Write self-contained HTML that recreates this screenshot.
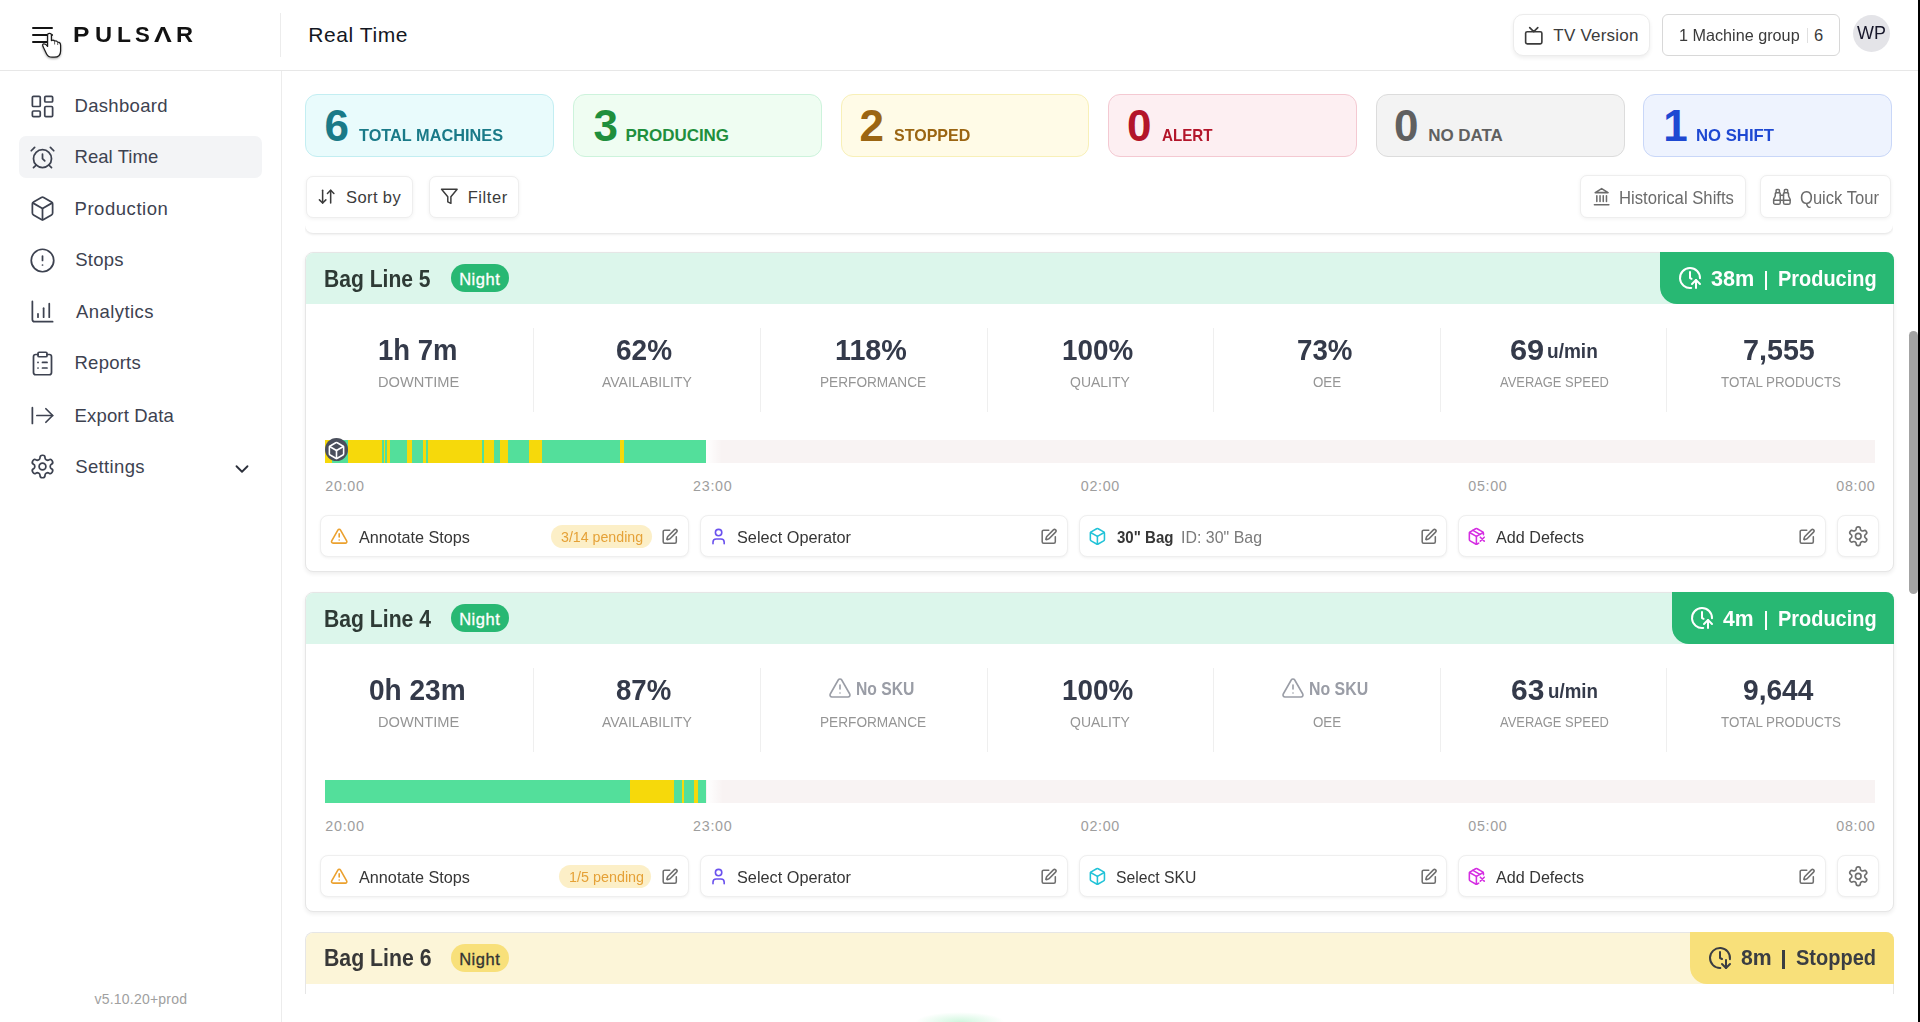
<!DOCTYPE html>
<html><head><meta charset="utf-8"><title>Real Time</title>
<style>
html,body{margin:0;padding:0;}
body{width:1920px;height:1022px;overflow:hidden;position:relative;background:#fff;font-family:"Liberation Sans",sans-serif;}
</style></head><body>
<div style="position:absolute;left:0px;top:70px;width:1918px;height:1px;background:#e7e7e7"></div><div style="position:absolute;left:280px;top:13px;width:1px;height:44px;background:#ececec"></div><div style="position:absolute;left:281px;top:71px;width:1px;height:951px;background:#ececec"></div><div style="position:absolute;left:1918px;top:0px;width:2px;height:1022px;background:#000"></div><div style="position:absolute;left:32px;top:27px;width:20.5px;height:2.1000000000000014px;background:#141414;border-radius:1px"></div><div style="position:absolute;left:32px;top:34px;width:20.5px;height:2.1000000000000014px;background:#141414;border-radius:1px"></div><div style="position:absolute;left:32px;top:41px;width:20.5px;height:2.1000000000000014px;background:#141414;border-radius:1px"></div><div style="position:absolute;left:73.36px;top:23.95px;font-size:22.5px;line-height:22.5px;font-weight:700;color:#121212;letter-spacing:0.000px;white-space:nowrap;transform:scaleX(1.0938);transform-origin:0 0;">P</div><div style="position:absolute;left:94.93px;top:23.95px;font-size:22.5px;line-height:22.5px;font-weight:700;color:#121212;letter-spacing:0.000px;white-space:nowrap;transform:scaleX(1.0515);transform-origin:0 0;">U</div><div style="position:absolute;left:117.27px;top:23.95px;font-size:22.5px;line-height:22.5px;font-weight:700;color:#121212;letter-spacing:0.000px;white-space:nowrap;transform:scaleX(1.0172);transform-origin:0 0;">L</div><div style="position:absolute;left:135.41px;top:23.95px;font-size:22.5px;line-height:22.5px;font-weight:700;color:#121212;letter-spacing:0.000px;white-space:nowrap;transform:scaleX(0.9853);transform-origin:0 0;">S</div><div style="position:absolute;left:154.28px;top:23.95px;font-size:22.5px;line-height:22.5px;font-weight:700;color:#121212;letter-spacing:0.000px;white-space:nowrap;transform:scaleX(1.1824);transform-origin:0 0;">&#923;</div><div style="position:absolute;left:175.93px;top:23.95px;font-size:22.5px;line-height:22.5px;font-weight:700;color:#121212;letter-spacing:0.000px;white-space:nowrap;transform:scaleX(1.0490);transform-origin:0 0;">R</div><svg style="position:absolute;left:0;top:0;filter:drop-shadow(0 1px 1.2px rgba(0,0,0,0.35))" width="80" height="70" viewBox="0 0 80 70">
<path d="M47.6 35Q47.6 33.3 49.5 33.3Q51.4 33.3 51.4 35L51.4 40.6Q53.6 39.6 54.6 41.2Q56.6 40.3 57.7 42.2Q60.6 42.2 60.6 45.6L60.6 51Q60.6 57.2 54.2 57.2L52.2 57.2Q48.2 57.2 46.6 54L43 46.6Q42.1 44.2 43.6 43.8Q45.6 43.4 47.6 46.4Z" fill="#fff" stroke="#1c1c1c" stroke-width="1.25" stroke-linejoin="round"/>
<path d="M54.6 41.2L54.6 44.5M57.7 42.2L57.7 45" stroke="#555" stroke-width="0.9"/>
</svg><div style="position:absolute;left:308.30px;top:24.22px;font-size:21px;line-height:21px;font-weight:400;color:#131722;letter-spacing:0.584px;white-space:nowrap;">Real Time</div><div style="position:absolute;left:1513px;top:13.5px;width:137px;height:42.5px;background:#fff;border:1px solid #ececec;border-radius:10px;box-sizing:border-box;box-shadow:0 2px 4px rgba(0,0,0,0.07)"></div><svg style="position:absolute;left:1524.4px;top:25.7px;" width="19.5" height="19.5" viewBox="0 0 24 24" fill="none" stroke="#3b3b3b" stroke-width="2" stroke-linecap="round" stroke-linejoin="round"><rect width="20" height="15" x="2" y="7" rx="2" ry="2"/><polyline points="17 2 12 7 7 2"/></svg><div style="position:absolute;left:1553.30px;top:26.71px;font-size:17px;line-height:17px;font-weight:400;color:#3b3b3b;letter-spacing:0.212px;white-space:nowrap;">TV Version</div><div style="position:absolute;left:1662px;top:14px;width:178px;height:41.5px;background:#fff;border:1px solid #d8d8d8;border-radius:6px;box-sizing:border-box"></div><div style="position:absolute;left:1679.02px;top:26.63px;font-size:16.5px;line-height:16.5px;font-weight:400;color:#3a3a3a;letter-spacing:0.000px;white-space:nowrap;transform:scaleX(0.9815);transform-origin:0 0;">1 Machine group</div><div style="position:absolute;left:1806.5px;top:28px;width:1.0px;height:15px;background:#e0e0e0"></div><div style="position:absolute;left:1813.90px;top:26.63px;font-size:16.5px;line-height:16.5px;font-weight:400;color:#3a3a3a;letter-spacing:0.000px;white-space:nowrap;">6</div><div style="position:absolute;left:1852.5px;top:14.5px;width:37px;height:37px;border-radius:50%;background:#e4e4e8"></div><div style="position:absolute;left:1857.00px;top:24.04px;font-size:18.5px;line-height:18.5px;font-weight:400;color:#17172a;letter-spacing:0.000px;white-space:nowrap;transform:scaleX(0.9702);transform-origin:0 0;">WP</div><div style="position:absolute;left:19px;top:136.4px;width:243px;height:41.900000000000006px;background:#f3f4f6;border-radius:7px"></div><svg style="position:absolute;left:28.7px;top:92.5px;" width="27" height="27" viewBox="0 0 24 24" fill="none" stroke="#3d4250" stroke-width="1.55" stroke-linecap="round" stroke-linejoin="round"><rect width="7" height="9" x="3" y="3" rx="1"/><rect width="7" height="5" x="14" y="3" rx="1"/><rect width="7" height="9" x="14" y="12" rx="1"/><rect width="7" height="5" x="3" y="16" rx="1"/></svg><div style="position:absolute;left:74.50px;top:97.24px;font-size:18.5px;line-height:18.5px;font-weight:400;color:#3d4250;letter-spacing:0.323px;white-space:nowrap;">Dashboard</div><svg style="position:absolute;left:28.7px;top:143.5px;" width="27" height="27" viewBox="0 0 24 24" fill="none" stroke="#3d4250" stroke-width="1.55" stroke-linecap="round" stroke-linejoin="round"><circle cx="12" cy="13" r="8"/><path d="M12 9v4l2 2"/><path d="M5 3 2 6"/><path d="m22 6-3-3"/><path d="M6.38 18.7 4 21"/><path d="M17.64 18.67 20 21"/></svg><div style="position:absolute;left:74.50px;top:148.24px;font-size:18.5px;line-height:18.5px;font-weight:400;color:#3d4250;letter-spacing:0.060px;white-space:nowrap;">Real Time</div><svg style="position:absolute;left:28.7px;top:195.2px;" width="27" height="27" viewBox="0 0 24 24" fill="none" stroke="#3d4250" stroke-width="1.55" stroke-linecap="round" stroke-linejoin="round"><path d="M21 8a2 2 0 0 0-1-1.73l-7-4a2 2 0 0 0-2 0l-7 4A2 2 0 0 0 3 8v8a2 2 0 0 0 1 1.73l7 4a2 2 0 0 0 2 0l7-4A2 2 0 0 0 21 16Z"/><path d="m3.3 7 8.7 5 8.7-5"/><path d="M12 22V12"/></svg><div style="position:absolute;left:74.50px;top:199.94px;font-size:18.5px;line-height:18.5px;font-weight:400;color:#3d4250;letter-spacing:0.549px;white-space:nowrap;">Production</div><svg style="position:absolute;left:28.7px;top:246.7px;" width="27" height="27" viewBox="0 0 24 24" fill="none" stroke="#3d4250" stroke-width="1.55" stroke-linecap="round" stroke-linejoin="round"><circle cx="12" cy="12" r="10"/><line x1="12" x2="12" y1="8" y2="12"/><line x1="12" x2="12.01" y1="16" y2="16"/></svg><div style="position:absolute;left:75.20px;top:251.44px;font-size:18.5px;line-height:18.5px;font-weight:400;color:#3d4250;letter-spacing:0.236px;white-space:nowrap;">Stops</div><svg style="position:absolute;left:28.7px;top:298.1px;" width="27" height="27" viewBox="0 0 24 24" fill="none" stroke="#3d4250" stroke-width="1.55" stroke-linecap="round" stroke-linejoin="round"><path d="M13 17V9"/><path d="M18 17V5"/><path d="M3 3v16a2 2 0 0 0 2 2h16"/><path d="M8 17v-3"/></svg><div style="position:absolute;left:76.00px;top:302.84px;font-size:18.5px;line-height:18.5px;font-weight:400;color:#3d4250;letter-spacing:0.428px;white-space:nowrap;">Analytics</div><svg style="position:absolute;left:28.7px;top:349.7px;" width="27" height="27" viewBox="0 0 24 24" fill="none" stroke="#3d4250" stroke-width="1.55" stroke-linecap="round" stroke-linejoin="round"><rect width="8" height="4" x="8" y="2" rx="1" ry="1"/><path d="M16 4h2a2 2 0 0 1 2 2v14a2 2 0 0 1-2 2H6a2 2 0 0 1-2-2V6a2 2 0 0 1 2-2h2"/><path d="M12 11h4"/><path d="M12 16h4"/><path d="M8 11h.01"/><path d="M8 16h.01"/></svg><div style="position:absolute;left:74.50px;top:354.44px;font-size:18.5px;line-height:18.5px;font-weight:400;color:#3d4250;letter-spacing:0.245px;white-space:nowrap;">Reports</div><svg style="position:absolute;left:28.7px;top:401.9px;" width="27" height="27" viewBox="0 0 24 24" fill="none" stroke="#3d4250" stroke-width="1.55" stroke-linecap="round" stroke-linejoin="round"><path d="M3 5v14"/><path d="M21 12H7"/><path d="m15 18 6-6-6-6"/></svg><div style="position:absolute;left:74.50px;top:406.64px;font-size:18.5px;line-height:18.5px;font-weight:400;color:#3d4250;letter-spacing:0.170px;white-space:nowrap;">Export Data</div><svg style="position:absolute;left:28.7px;top:453.3px;" width="27" height="27" viewBox="0 0 24 24" fill="none" stroke="#3d4250" stroke-width="1.55" stroke-linecap="round" stroke-linejoin="round"><path d="M12.22 2h-.44a2 2 0 0 0-2 2v.18a2 2 0 0 1-1 1.73l-.43.25a2 2 0 0 1-2 0l-.15-.08a2 2 0 0 0-2.73.73l-.22.38a2 2 0 0 0 .73 2.73l.15.1a2 2 0 0 1 1 1.72v.51a2 2 0 0 1-1 1.74l-.15.09a2 2 0 0 0-.73 2.73l.22.38a2 2 0 0 0 2.73.73l.15-.08a2 2 0 0 1 2 0l.43.25a2 2 0 0 1 1 1.73V20a2 2 0 0 0 2 2h.44a2 2 0 0 0 2-2v-.18a2 2 0 0 1 1-1.73l.43-.25a2 2 0 0 1 2 0l.15.08a2 2 0 0 0 2.73-.73l.22-.39a2 2 0 0 0-.73-2.73l-.15-.08a2 2 0 0 1-1-1.74v-.5a2 2 0 0 1 1-1.74l.15-.09a2 2 0 0 0 .73-2.73l-.22-.38a2 2 0 0 0-2.73-.73l-.15.08a2 2 0 0 1-2 0l-.43-.25a2 2 0 0 1-1-1.73V4a2 2 0 0 0-2-2z"/><circle cx="12" cy="12" r="3"/></svg><div style="position:absolute;left:75.20px;top:458.04px;font-size:18.5px;line-height:18.5px;font-weight:400;color:#3d4250;letter-spacing:0.358px;white-space:nowrap;">Settings</div><svg style="position:absolute;left:230.5px;top:457.5px;" width="22" height="22" viewBox="0 0 24 24" fill="none" stroke="#2b2f3a" stroke-width="2" stroke-linecap="round" stroke-linejoin="round"><path d="m6 9 6 6 6-6"/></svg><div style="position:absolute;left:94.45px;top:991.65px;font-size:14px;line-height:14px;font-weight:400;color:#a0a0a0;letter-spacing:0.223px;white-space:nowrap;">v5.10.20+prod</div><div style="position:absolute;left:305px;top:71px;width:1588px;height:162px;background:#fff;border-radius:0 0 8px 8px;box-shadow:0 1px 3px rgba(0,0,0,0.13);clip-path:inset(0 0 -10px 0)"></div><div style="position:absolute;left:305px;top:94px;width:248.60000000000002px;height:63px;background:#e9fbfc;border:1px solid #c3eef2;border-radius:12px;box-sizing:border-box"></div><div style="position:absolute;left:324.62px;top:103.75px;font-size:44px;line-height:44px;font-weight:700;color:#1a7a88;letter-spacing:0.000px;white-space:nowrap;">6</div><div style="position:absolute;left:359.10px;top:126.61px;font-size:17px;line-height:17px;font-weight:700;color:#1a7a88;letter-spacing:0.000px;white-space:nowrap;transform:scaleX(0.9590);transform-origin:0 0;">TOTAL MACHINES</div><div style="position:absolute;left:573.3px;top:94px;width:248.60000000000002px;height:63px;background:#effdf2;border:1px solid #cdf3dc;border-radius:12px;box-sizing:border-box"></div><div style="position:absolute;left:593.51px;top:103.75px;font-size:44px;line-height:44px;font-weight:700;color:#1f8f3d;letter-spacing:0.000px;white-space:nowrap;">3</div><div style="position:absolute;left:625.60px;top:126.61px;font-size:17px;line-height:17px;font-weight:700;color:#1f8f3d;letter-spacing:-0.059px;white-space:nowrap;">PRODUCING</div><div style="position:absolute;left:840.5px;top:94px;width:248.5999999999999px;height:63px;background:#fffbe7;border:1px solid #f8f0b8;border-radius:12px;box-sizing:border-box"></div><div style="position:absolute;left:859.62px;top:103.75px;font-size:44px;line-height:44px;font-weight:700;color:#9b6512;letter-spacing:0.000px;white-space:nowrap;">2</div><div style="position:absolute;left:893.82px;top:126.61px;font-size:17px;line-height:17px;font-weight:700;color:#9b6512;letter-spacing:0.000px;white-space:nowrap;transform:scaleX(0.9430);transform-origin:0 0;">STOPPED</div><div style="position:absolute;left:1108.1px;top:94px;width:248.5999999999999px;height:63px;background:#fdeff2;border:1px solid #f4c9d2;border-radius:12px;box-sizing:border-box"></div><div style="position:absolute;left:1127.12px;top:103.75px;font-size:44px;line-height:44px;font-weight:700;color:#b3152a;letter-spacing:0.000px;white-space:nowrap;">0</div><div style="position:absolute;left:1161.94px;top:126.61px;font-size:17px;line-height:17px;font-weight:700;color:#b3152a;letter-spacing:0.000px;white-space:nowrap;transform:scaleX(0.8918);transform-origin:0 0;">ALERT</div><div style="position:absolute;left:1376px;top:94px;width:248.5999999999999px;height:63px;background:#f3f3f3;border:1px solid #dcdcdc;border-radius:12px;box-sizing:border-box"></div><div style="position:absolute;left:1394.03px;top:103.75px;font-size:44px;line-height:44px;font-weight:700;color:#606060;letter-spacing:0.000px;white-space:nowrap;">0</div><div style="position:absolute;left:1428.20px;top:126.61px;font-size:17px;line-height:17px;font-weight:700;color:#606060;letter-spacing:-0.040px;white-space:nowrap;">NO DATA</div><div style="position:absolute;left:1643.3px;top:94px;width:248.5999999999999px;height:63px;background:#eef3fe;border:1px solid #c9d7f8;border-radius:12px;box-sizing:border-box"></div><div style="position:absolute;left:1663.15px;top:103.75px;font-size:44px;line-height:44px;font-weight:700;color:#1e48d2;letter-spacing:0.000px;white-space:nowrap;">1</div><div style="position:absolute;left:1695.92px;top:126.61px;font-size:17px;line-height:17px;font-weight:700;color:#1e48d2;letter-spacing:0.000px;white-space:nowrap;transform:scaleX(0.9828);transform-origin:0 0;">NO SHIFT</div><div style="position:absolute;left:306px;top:176px;width:107px;height:42px;background:#fff;border:1px solid #eeeeee;border-radius:7px;box-sizing:border-box;box-shadow:0 1px 4px rgba(0,0,0,0.06)"></div><svg style="position:absolute;left:317.3px;top:186.8px;" width="19.3" height="19.3" viewBox="0 0 24 24" fill="none" stroke="#3b3b3b" stroke-width="1.9" stroke-linecap="round" stroke-linejoin="round"><path d="m3 16 4 4 4-4"/><path d="M7 20V4"/><path d="m21 8-4-4-4 4"/><path d="M17 4v16"/></svg><div style="position:absolute;left:346.10px;top:188.83px;font-size:16.5px;line-height:16.5px;font-weight:400;color:#3b3b3b;letter-spacing:0.380px;white-space:nowrap;">Sort by</div><div style="position:absolute;left:429px;top:176px;width:90px;height:42px;background:#fff;border:1px solid #eeeeee;border-radius:7px;box-sizing:border-box;box-shadow:0 1px 4px rgba(0,0,0,0.06)"></div><svg style="position:absolute;left:440.2px;top:187.2px;" width="18.7" height="18.7" viewBox="0 0 24 24" fill="none" stroke="#3b3b3b" stroke-width="1.9" stroke-linecap="round" stroke-linejoin="round"><polygon points="22 3 2 3 10 12.46 10 19 14 21 14 12.46 22 3"/></svg><div style="position:absolute;left:467.70px;top:188.83px;font-size:16.5px;line-height:16.5px;font-weight:400;color:#3b3b3b;letter-spacing:0.566px;white-space:nowrap;">Filter</div><div style="position:absolute;left:1579.5px;top:175.3px;width:166.70000000000005px;height:43.0px;background:#fff;border:1px solid #eeeeee;border-radius:7px;box-sizing:border-box;box-shadow:0 1px 4px rgba(0,0,0,0.06)"></div><svg style="position:absolute;left:1591.5px;top:187.3px;" width="19.3" height="19.3" viewBox="0 0 24 24" fill="none" stroke="#6b6b6b" stroke-width="1.9" stroke-linecap="round" stroke-linejoin="round"><line x1="3" x2="21" y1="22" y2="22"/><line x1="6" x2="6" y1="18" y2="11"/><line x1="10" x2="10" y1="18" y2="11"/><line x1="14" x2="14" y1="18" y2="11"/><line x1="18" x2="18" y1="18" y2="11"/><polygon points="12 2 20 7 4 7"/></svg><div style="position:absolute;left:1618.90px;top:189.16px;font-size:18px;line-height:18px;font-weight:400;color:#6b6b6b;letter-spacing:0.000px;white-space:nowrap;transform:scaleX(0.9268);transform-origin:0 0;">Historical Shifts</div><div style="position:absolute;left:1760.4px;top:175.3px;width:131.0px;height:43.0px;background:#fff;border:1px solid #eeeeee;border-radius:7px;box-sizing:border-box;box-shadow:0 1px 4px rgba(0,0,0,0.06)"></div><svg style="position:absolute;left:1771.9px;top:187.3px;" width="19.8" height="19.8" viewBox="0 0 24 24" fill="none" stroke="#6b6b6b" stroke-width="1.8" stroke-linecap="round" stroke-linejoin="round"><path d="M10 10h4"/><path d="M19 7V4a1 1 0 0 0-1-1h-2a1 1 0 0 0-1 1v3"/><path d="M20 21a2 2 0 0 0 2-2v-3.851c0-1.39-2-2.962-2-4.829V8a1 1 0 0 0-1-1h-4a1 1 0 0 0-1 1v11a2 2 0 0 0 2 2z"/><path d="M22 16H2"/><path d="M4 21a2 2 0 0 1-2-2v-3.851c0-1.39 2-2.962 2-4.829V8a1 1 0 0 1 1-1h4a1 1 0 0 1 1 1v11a2 2 0 0 1-2 2z"/><path d="M9 7V4a1 1 0 0 0-1-1H6a1 1 0 0 0-1 1v3"/></svg><div style="position:absolute;left:1800.46px;top:189.16px;font-size:18px;line-height:18px;font-weight:400;color:#6b6b6b;letter-spacing:0.000px;white-space:nowrap;transform:scaleX(0.9207);transform-origin:0 0;">Quick Tour</div><div style="position:absolute;left:305px;top:252px;width:1589px;height:320px;background:#fff;border:1px solid #e6e6e6;border-radius:8px;box-sizing:border-box;box-shadow:0 2px 4px rgba(0,0,0,0.07)"></div><div style="position:absolute;left:306px;top:253px;width:1587px;height:51.30000000000001px;background:#dcf6eb;border-radius:7px 7px 0 0"></div><div style="position:absolute;left:324.39px;top:266.78px;font-size:24px;line-height:24px;font-weight:700;color:#2e3a35;letter-spacing:0.000px;white-space:nowrap;transform:scaleX(0.8782);transform-origin:0 0;">Bag Line 5</div><div style="position:absolute;left:450.5px;top:264px;width:58.5px;height:28px;background:#28b873;border-radius:14px"></div><div style="position:absolute;left:459.20px;top:271.43px;font-size:16.5px;line-height:16.5px;font-weight:400;color:#fff;letter-spacing:0.516px;white-space:nowrap;-webkit-text-stroke:0.3px #fff">Night</div><div style="position:absolute;left:1660px;top:252px;width:234px;height:52.30000000000001px;background:#28b873;border-radius:0 8px 0 17px"></div><svg style="position:absolute;left:1678px;top:266.1px;" width="24" height="24" viewBox="0 0 24 24" fill="none" stroke="#fff" stroke-width="2" stroke-linecap="round" stroke-linejoin="round"><path d="M13.228 21.925A10 10 0 1 1 21.994 12.338"/><path d="M12 6v6l1.562.781"/><path d="m14 18 4-4 4 4"/><path d="M18 22v-8"/></svg><div style="position:absolute;left:1711.01px;top:267.98px;font-size:22px;line-height:22px;font-weight:700;color:#fff;letter-spacing:0.000px;white-space:nowrap;transform:scaleX(0.9841);transform-origin:0 0;">38m</div><div style="position:absolute;left:1764.7px;top:270.5px;width:2.5px;height:19.0px;background:#fff"></div><div style="position:absolute;left:1777.73px;top:267.98px;font-size:22px;line-height:22px;font-weight:700;color:#fff;letter-spacing:0.000px;white-space:nowrap;transform:scaleX(0.9062);transform-origin:0 0;">Producing</div><div style="position:absolute;left:533.4px;top:328px;width:1.0px;height:84px;background:#efefef"></div><div style="position:absolute;left:760.0px;top:328px;width:1.0px;height:84px;background:#efefef"></div><div style="position:absolute;left:986.5999999999999px;top:328px;width:1.0px;height:84px;background:#efefef"></div><div style="position:absolute;left:1213.2px;top:328px;width:1.0px;height:84px;background:#efefef"></div><div style="position:absolute;left:1439.8px;top:328px;width:1.0px;height:84px;background:#efefef"></div><div style="position:absolute;left:1666.3999999999999px;top:328px;width:1.0px;height:84px;background:#efefef"></div><div style="position:absolute;left:377.78px;top:336.15px;font-size:29px;line-height:29px;font-weight:700;color:#343a4a;letter-spacing:0.000px;white-space:nowrap;transform:scaleX(0.9473);transform-origin:0 0;">1h 7m</div><div style="position:absolute;left:378.33px;top:373.90px;font-size:15px;line-height:15px;font-weight:400;color:#959595;letter-spacing:0.000px;white-space:nowrap;transform:scaleX(0.9753);transform-origin:0 0;">DOWNTIME</div><div style="position:absolute;left:616.13px;top:336.15px;font-size:29px;line-height:29px;font-weight:700;color:#343a4a;letter-spacing:0.000px;white-space:nowrap;transform:scaleX(0.9652);transform-origin:0 0;">62%</div><div style="position:absolute;left:601.75px;top:373.90px;font-size:15px;line-height:15px;font-weight:400;color:#959595;letter-spacing:0.000px;white-space:nowrap;transform:scaleX(0.9338);transform-origin:0 0;">AVAILABILITY</div><div style="position:absolute;left:834.90px;top:336.15px;font-size:29px;line-height:29px;font-weight:700;color:#343a4a;letter-spacing:0.000px;white-space:nowrap;transform:scaleX(0.9908);transform-origin:0 0;">118%</div><div style="position:absolute;left:820.31px;top:373.90px;font-size:15px;line-height:15px;font-weight:400;color:#959595;letter-spacing:0.000px;white-space:nowrap;transform:scaleX(0.9097);transform-origin:0 0;">PERFORMANCE</div><div style="position:absolute;left:1062.26px;top:336.15px;font-size:29px;line-height:29px;font-weight:700;color:#343a4a;letter-spacing:0.000px;white-space:nowrap;transform:scaleX(0.9590);transform-origin:0 0;">100%</div><div style="position:absolute;left:1070.35px;top:373.90px;font-size:15px;line-height:15px;font-weight:400;color:#959595;letter-spacing:0.000px;white-space:nowrap;transform:scaleX(0.9323);transform-origin:0 0;">QUALITY</div><div style="position:absolute;left:1296.83px;top:336.15px;font-size:29px;line-height:29px;font-weight:700;color:#343a4a;letter-spacing:0.000px;white-space:nowrap;transform:scaleX(0.9555);transform-origin:0 0;">73%</div><div style="position:absolute;left:1312.98px;top:373.90px;font-size:15px;line-height:15px;font-weight:400;color:#959595;letter-spacing:0.000px;white-space:nowrap;transform:scaleX(0.8890);transform-origin:0 0;">OEE</div><div style="position:absolute;left:1510.04px;top:336.15px;font-size:29px;line-height:29px;font-weight:700;color:#343a4a;letter-spacing:0.000px;white-space:nowrap;transform:scaleX(1.0611);transform-origin:0 0;">69</div><div style="position:absolute;left:1547.23px;top:341.89px;font-size:19.5px;line-height:19.5px;font-weight:700;color:#343a4a;letter-spacing:0.000px;white-space:nowrap;transform:scaleX(0.9761);transform-origin:0 0;">u/min</div><div style="position:absolute;left:1499.70px;top:373.90px;font-size:15px;line-height:15px;font-weight:400;color:#959595;letter-spacing:0.000px;white-space:nowrap;transform:scaleX(0.8609);transform-origin:0 0;">AVERAGE SPEED</div><div style="position:absolute;left:1742.50px;top:336.15px;font-size:29px;line-height:29px;font-weight:700;color:#343a4a;letter-spacing:0.000px;white-space:nowrap;transform:scaleX(0.9895);transform-origin:0 0;">7,555</div><div style="position:absolute;left:1720.73px;top:373.90px;font-size:15px;line-height:15px;font-weight:400;color:#959595;letter-spacing:0.000px;white-space:nowrap;transform:scaleX(0.8907);transform-origin:0 0;">TOTAL PRODUCTS</div><div style="position:absolute;left:325px;top:440px;width:1550px;height:23px;background:#f8f3f3"></div><div style="position:absolute;left:325px;top:440px;width:7px;height:23px;background:#f6d90b"></div><div style="position:absolute;left:332px;top:440px;width:16px;height:23px;background:#53df9b"></div><div style="position:absolute;left:348px;top:440px;width:33.69999999999999px;height:23px;background:#f6d90b"></div><div style="position:absolute;left:381.7px;top:440px;width:2.0500000000000114px;height:23px;background:#53df9b"></div><div style="position:absolute;left:383.75px;top:440px;width:1.5500000000000114px;height:23px;background:#f6d90b"></div><div style="position:absolute;left:385.3px;top:440px;width:2.099999999999966px;height:23px;background:#53df9b"></div><div style="position:absolute;left:387.4px;top:440px;width:2.400000000000034px;height:23px;background:#f6d90b"></div><div style="position:absolute;left:389.8px;top:440px;width:17.099999999999966px;height:23px;background:#53df9b"></div><div style="position:absolute;left:406.9px;top:440px;width:5.5px;height:23px;background:#f6d90b"></div><div style="position:absolute;left:412.4px;top:440px;width:10.900000000000034px;height:23px;background:#53df9b"></div><div style="position:absolute;left:423.3px;top:440px;width:2.599999999999966px;height:23px;background:#f6d90b"></div><div style="position:absolute;left:425.9px;top:440px;width:2.1000000000000227px;height:23px;background:#53df9b"></div><div style="position:absolute;left:428px;top:440px;width:54.19999999999999px;height:23px;background:#f6d90b"></div><div style="position:absolute;left:482.2px;top:440px;width:2.1000000000000227px;height:23px;background:#53df9b"></div><div style="position:absolute;left:484.3px;top:440px;width:9.899999999999977px;height:23px;background:#f6d90b"></div><div style="position:absolute;left:494.2px;top:440px;width:1.5px;height:23px;background:#53df9b"></div><div style="position:absolute;left:495.7px;top:440px;width:4.199999999999989px;height:23px;background:#53df9b"></div><div style="position:absolute;left:499.9px;top:440px;width:8.200000000000045px;height:23px;background:#f6d90b"></div><div style="position:absolute;left:508.1px;top:440px;width:20.899999999999977px;height:23px;background:#53df9b"></div><div style="position:absolute;left:529px;top:440px;width:12.899999999999977px;height:23px;background:#f6d90b"></div><div style="position:absolute;left:541.9px;top:440px;width:78.10000000000002px;height:23px;background:#53df9b"></div><div style="position:absolute;left:620px;top:440px;width:4.100000000000023px;height:23px;background:#f6d90b"></div><div style="position:absolute;left:624.1px;top:440px;width:82.14999999999998px;height:23px;background:#53df9b"></div><div style="position:absolute;left:706.25px;top:439px;width:16.0px;height:25px;background:linear-gradient(90deg,#fff,rgba(255,255,255,0))"></div><div style="position:absolute;left:325.2px;top:438.3px;width:23px;height:23px;border-radius:50%;background:#4a4f5c"></div><svg style="position:absolute;left:327.4px;top:440.9px;" width="19" height="19" viewBox="0 0 24 24" fill="none" stroke="#fff" stroke-width="2" stroke-linecap="round" stroke-linejoin="round"><path d="M21 8a2 2 0 0 0-1-1.73l-7-4a2 2 0 0 0-2 0l-7 4A2 2 0 0 0 3 8v8a2 2 0 0 0 1 1.73l7 4a2 2 0 0 0 2 0l7-4A2 2 0 0 0 21 16Z"/><path d="m3.3 7 8.7 5 8.7-5"/><path d="M12 22V12"/></svg><div style="position:absolute;left:325.30px;top:478.50px;font-size:14.3px;line-height:14.3px;font-weight:400;color:#9e9e9e;letter-spacing:0.717px;white-space:nowrap;">20:00</div><div style="position:absolute;left:693.10px;top:478.50px;font-size:14.3px;line-height:14.3px;font-weight:400;color:#9e9e9e;letter-spacing:0.717px;white-space:nowrap;">23:00</div><div style="position:absolute;left:1080.80px;top:478.50px;font-size:14.3px;line-height:14.3px;font-weight:400;color:#9e9e9e;letter-spacing:0.667px;white-space:nowrap;">02:00</div><div style="position:absolute;left:1468.30px;top:478.50px;font-size:14.3px;line-height:14.3px;font-weight:400;color:#9e9e9e;letter-spacing:0.667px;white-space:nowrap;">05:00</div><div style="position:absolute;left:1836.30px;top:478.50px;font-size:14.3px;line-height:14.3px;font-weight:400;color:#9e9e9e;letter-spacing:0.667px;white-space:nowrap;">08:00</div><div style="position:absolute;left:320.4px;top:515.4px;width:368.80000000000007px;height:41.60000000000002px;background:#fff;border:1px solid #efefef;border-radius:8px;box-sizing:border-box;box-shadow:0 1px 3px rgba(0,0,0,0.06)"></div><svg style="position:absolute;left:661.3000000000001px;top:527.9px;" width="17.5" height="17.5" viewBox="0 0 24 24" fill="none" stroke="#6e6e6e" stroke-width="2.1" stroke-linecap="round" stroke-linejoin="round"><path d="M12 3H5a2 2 0 0 0-2 2v14a2 2 0 0 0 2 2h14a2 2 0 0 0 2-2v-7"/><path d="M18.375 2.625a1 1 0 0 1 3 3l-9.013 9.014a2 2 0 0 1-.853.505l-2.873.84a.5.5 0 0 1-.62-.62l.84-2.873a2 2 0 0 1 .506-.852z"/></svg><div style="position:absolute;left:700.1px;top:515.4px;width:367.6px;height:41.60000000000002px;background:#fff;border:1px solid #efefef;border-radius:8px;box-sizing:border-box;box-shadow:0 1px 3px rgba(0,0,0,0.06)"></div><svg style="position:absolute;left:1039.8px;top:527.9px;" width="17.5" height="17.5" viewBox="0 0 24 24" fill="none" stroke="#6e6e6e" stroke-width="2.1" stroke-linecap="round" stroke-linejoin="round"><path d="M12 3H5a2 2 0 0 0-2 2v14a2 2 0 0 0 2 2h14a2 2 0 0 0 2-2v-7"/><path d="M18.375 2.625a1 1 0 0 1 3 3l-9.013 9.014a2 2 0 0 1-.853.505l-2.873.84a.5.5 0 0 1-.62-.62l.84-2.873a2 2 0 0 1 .506-.852z"/></svg><div style="position:absolute;left:1079px;top:515.4px;width:368.4000000000001px;height:41.60000000000002px;background:#fff;border:1px solid #efefef;border-radius:8px;box-sizing:border-box;box-shadow:0 1px 3px rgba(0,0,0,0.06)"></div><svg style="position:absolute;left:1419.5px;top:527.9px;" width="17.5" height="17.5" viewBox="0 0 24 24" fill="none" stroke="#6e6e6e" stroke-width="2.1" stroke-linecap="round" stroke-linejoin="round"><path d="M12 3H5a2 2 0 0 0-2 2v14a2 2 0 0 0 2 2h14a2 2 0 0 0 2-2v-7"/><path d="M18.375 2.625a1 1 0 0 1 3 3l-9.013 9.014a2 2 0 0 1-.853.505l-2.873.84a.5.5 0 0 1-.62-.62l.84-2.873a2 2 0 0 1 .506-.852z"/></svg><div style="position:absolute;left:1458px;top:515.4px;width:368.20000000000005px;height:41.60000000000002px;background:#fff;border:1px solid #efefef;border-radius:8px;box-sizing:border-box;box-shadow:0 1px 3px rgba(0,0,0,0.06)"></div><svg style="position:absolute;left:1798.3px;top:527.9px;" width="17.5" height="17.5" viewBox="0 0 24 24" fill="none" stroke="#6e6e6e" stroke-width="2.1" stroke-linecap="round" stroke-linejoin="round"><path d="M12 3H5a2 2 0 0 0-2 2v14a2 2 0 0 0 2 2h14a2 2 0 0 0 2-2v-7"/><path d="M18.375 2.625a1 1 0 0 1 3 3l-9.013 9.014a2 2 0 0 1-.853.505l-2.873.84a.5.5 0 0 1-.62-.62l.84-2.873a2 2 0 0 1 .506-.852z"/></svg><div style="position:absolute;left:1836.5px;top:515.4px;width:42.700000000000045px;height:41.60000000000002px;background:#fff;border:1px solid #efefef;border-radius:8px;box-sizing:border-box;box-shadow:0 1px 3px rgba(0,0,0,0.06)"></div><svg style="position:absolute;left:1846.7px;top:525px;" width="22.5" height="22.5" viewBox="0 0 24 24" fill="none" stroke="#6e6e6e" stroke-width="1.75" stroke-linecap="round" stroke-linejoin="round"><path d="M12.22 2h-.44a2 2 0 0 0-2 2v.18a2 2 0 0 1-1 1.73l-.43.25a2 2 0 0 1-2 0l-.15-.08a2 2 0 0 0-2.73.73l-.22.38a2 2 0 0 0 .73 2.73l.15.1a2 2 0 0 1 1 1.72v.51a2 2 0 0 1-1 1.74l-.15.09a2 2 0 0 0-.73 2.73l.22.38a2 2 0 0 0 2.73.73l.15-.08a2 2 0 0 1 2 0l.43.25a2 2 0 0 1 1 1.73V20a2 2 0 0 0 2 2h.44a2 2 0 0 0 2-2v-.18a2 2 0 0 1 1-1.73l.43-.25a2 2 0 0 1 2 0l.15.08a2 2 0 0 0 2.73-.73l.22-.39a2 2 0 0 0-.73-2.73l-.15-.08a2 2 0 0 1-1-1.74v-.5a2 2 0 0 1 1-1.74l.15-.09a2 2 0 0 0 .73-2.73l-.22-.38a2 2 0 0 0-2.73-.73l-.15.08a2 2 0 0 1-2 0l-.43-.25a2 2 0 0 1-1-1.73V4a2 2 0 0 0-2-2z"/><circle cx="12" cy="12" r="3"/></svg><svg style="position:absolute;left:330.3px;top:527.1px;" width="18.4" height="18.4" viewBox="0 0 24 24" fill="none" stroke="#eba12f" stroke-width="2.1" stroke-linecap="round" stroke-linejoin="round"><path d="m21.73 18-8-14a2 2 0 0 0-3.48 0l-8 14A2 2 0 0 0 4 21h16a2 2 0 0 0 1.73-3"/><path d="M12 9v4"/><path d="M12 17h.01"/></svg><div style="position:absolute;left:359.00px;top:528.71px;font-size:17px;line-height:17px;font-weight:400;color:#363636;letter-spacing:0.000px;white-space:nowrap;transform:scaleX(0.9546);transform-origin:0 0;">Annotate Stops</div><div style="position:absolute;left:550.6px;top:525.2px;width:101.10000000000002px;height:22.5px;background:#fcefc7;border-radius:12px"></div><div style="position:absolute;left:560.53px;top:528.90px;font-size:15px;line-height:15px;font-weight:400;color:#e5a137;letter-spacing:0.000px;white-space:nowrap;transform:scaleX(0.9460);transform-origin:0 0;">3/14 pending</div><svg style="position:absolute;left:708.8px;top:527.4px;" width="19.2" height="19.2" viewBox="0 0 24 24" fill="none" stroke="#6b52ee" stroke-width="2.0" stroke-linecap="round" stroke-linejoin="round"><path d="M19 21v-2a4 4 0 0 0-4-4H9a4 4 0 0 0-4 4v2"/><circle cx="12" cy="7" r="4"/></svg><div style="position:absolute;left:737.33px;top:528.71px;font-size:17px;line-height:17px;font-weight:400;color:#363636;letter-spacing:0.000px;white-space:nowrap;transform:scaleX(0.9568);transform-origin:0 0;">Select Operator</div><svg style="position:absolute;left:1088.3px;top:527.2px;" width="18.8" height="18.8" viewBox="0 0 24 24" fill="none" stroke="#22c3d8" stroke-width="2.0" stroke-linecap="round" stroke-linejoin="round"><path d="M21 8a2 2 0 0 0-1-1.73l-7-4a2 2 0 0 0-2 0l-7 4A2 2 0 0 0 3 8v8a2 2 0 0 0 1 1.73l7 4a2 2 0 0 0 2 0l7-4A2 2 0 0 0 21 16Z"/><path d="m3.3 7 8.7 5 8.7-5"/><path d="M12 22V12"/></svg><div style="position:absolute;left:1116.73px;top:528.71px;font-size:17px;line-height:17px;font-weight:700;color:#363636;letter-spacing:0.000px;white-space:nowrap;transform:scaleX(0.8843);transform-origin:0 0;">30&quot; Bag</div><div style="position:absolute;left:1181.29px;top:528.71px;font-size:17px;line-height:17px;font-weight:400;color:#7a7a7a;letter-spacing:0.000px;white-space:nowrap;transform:scaleX(0.9379);transform-origin:0 0;">ID: 30&quot; Bag</div><svg style="position:absolute;left:1467.1px;top:527.2px;" width="18.8" height="18.8" viewBox="0 0 24 24" fill="none" stroke="#d52ee2" stroke-width="2.0" stroke-linecap="round" stroke-linejoin="round"><path d="M21 10V8a2 2 0 0 0-1-1.73l-7-4a2 2 0 0 0-2 0l-7 4A2 2 0 0 0 3 8v8a2 2 0 0 0 1 1.73l7 4a2 2 0 0 0 2 0l2-1.14"/><path d="m7.5 4.27 9 5.15"/><polyline points="3.29 7 12 12 20.71 7"/><line x1="12" x2="12" y1="22" y2="12"/><path d="m17 13 5 5m-5 0 5-5"/></svg><div style="position:absolute;left:1496.30px;top:528.71px;font-size:17px;line-height:17px;font-weight:400;color:#363636;letter-spacing:0.000px;white-space:nowrap;transform:scaleX(0.9500);transform-origin:0 0;">Add Defects</div><div style="position:absolute;left:305px;top:592px;width:1589px;height:320px;background:#fff;border:1px solid #e6e6e6;border-radius:8px;box-sizing:border-box;box-shadow:0 2px 4px rgba(0,0,0,0.07)"></div><div style="position:absolute;left:306px;top:593px;width:1587px;height:51.299999999999955px;background:#dcf6eb;border-radius:7px 7px 0 0"></div><div style="position:absolute;left:324.39px;top:606.78px;font-size:24px;line-height:24px;font-weight:700;color:#2e3a35;letter-spacing:0.000px;white-space:nowrap;transform:scaleX(0.8813);transform-origin:0 0;">Bag Line 4</div><div style="position:absolute;left:450.5px;top:604px;width:58.5px;height:28px;background:#28b873;border-radius:14px"></div><div style="position:absolute;left:459.20px;top:611.43px;font-size:16.5px;line-height:16.5px;font-weight:400;color:#fff;letter-spacing:0.516px;white-space:nowrap;-webkit-text-stroke:0.3px #fff">Night</div><div style="position:absolute;left:1672px;top:592px;width:222px;height:52.299999999999955px;background:#28b873;border-radius:0 8px 0 17px"></div><svg style="position:absolute;left:1690px;top:606.1px;" width="24" height="24" viewBox="0 0 24 24" fill="none" stroke="#fff" stroke-width="2" stroke-linecap="round" stroke-linejoin="round"><path d="M13.228 21.925A10 10 0 1 1 21.994 12.338"/><path d="M12 6v6l1.562.781"/><path d="m14 18 4-4 4 4"/><path d="M18 22v-8"/></svg><div style="position:absolute;left:1722.71px;top:607.98px;font-size:22px;line-height:22px;font-weight:700;color:#fff;letter-spacing:0.000px;white-space:nowrap;transform:scaleX(0.9623);transform-origin:0 0;">4m</div><div style="position:absolute;left:1764.7px;top:610.5px;width:2.5px;height:19.0px;background:#fff"></div><div style="position:absolute;left:1777.73px;top:607.98px;font-size:22px;line-height:22px;font-weight:700;color:#fff;letter-spacing:0.000px;white-space:nowrap;transform:scaleX(0.9062);transform-origin:0 0;">Producing</div><div style="position:absolute;left:533.4px;top:668px;width:1.0px;height:84px;background:#efefef"></div><div style="position:absolute;left:760.0px;top:668px;width:1.0px;height:84px;background:#efefef"></div><div style="position:absolute;left:986.5999999999999px;top:668px;width:1.0px;height:84px;background:#efefef"></div><div style="position:absolute;left:1213.2px;top:668px;width:1.0px;height:84px;background:#efefef"></div><div style="position:absolute;left:1439.8px;top:668px;width:1.0px;height:84px;background:#efefef"></div><div style="position:absolute;left:1666.3999999999999px;top:668px;width:1.0px;height:84px;background:#efefef"></div><div style="position:absolute;left:368.82px;top:676.15px;font-size:29px;line-height:29px;font-weight:700;color:#343a4a;letter-spacing:0.000px;white-space:nowrap;transform:scaleX(0.9664);transform-origin:0 0;">0h 23m</div><div style="position:absolute;left:378.33px;top:713.90px;font-size:15px;line-height:15px;font-weight:400;color:#959595;letter-spacing:0.000px;white-space:nowrap;transform:scaleX(0.9753);transform-origin:0 0;">DOWNTIME</div><div style="position:absolute;left:616.34px;top:676.15px;font-size:29px;line-height:29px;font-weight:700;color:#343a4a;letter-spacing:0.000px;white-space:nowrap;transform:scaleX(0.9520);transform-origin:0 0;">87%</div><div style="position:absolute;left:601.75px;top:713.90px;font-size:15px;line-height:15px;font-weight:400;color:#959595;letter-spacing:0.000px;white-space:nowrap;transform:scaleX(0.9338);transform-origin:0 0;">AVAILABILITY</div><svg style="position:absolute;left:827.7px;top:676.2px;" width="24" height="24" viewBox="0 0 24 24" fill="none" stroke="#9a9da6" stroke-width="1.6" stroke-linecap="round" stroke-linejoin="round"><path d="m21.73 18-8-14a2 2 0 0 0-3.48 0l-8 14A2 2 0 0 0 4 21h16a2 2 0 0 0 1.73-3"/><path d="M12 9v4"/><path d="M12 17h.01"/></svg><div style="position:absolute;left:855.61px;top:678.82px;font-size:19px;line-height:19px;font-weight:700;color:#9a9da6;letter-spacing:0.000px;white-space:nowrap;transform:scaleX(0.8260);transform-origin:0 0;">No SKU</div><div style="position:absolute;left:820.31px;top:713.90px;font-size:15px;line-height:15px;font-weight:400;color:#959595;letter-spacing:0.000px;white-space:nowrap;transform:scaleX(0.9097);transform-origin:0 0;">PERFORMANCE</div><div style="position:absolute;left:1062.26px;top:676.15px;font-size:29px;line-height:29px;font-weight:700;color:#343a4a;letter-spacing:0.000px;white-space:nowrap;transform:scaleX(0.9590);transform-origin:0 0;">100%</div><div style="position:absolute;left:1070.35px;top:713.90px;font-size:15px;line-height:15px;font-weight:400;color:#959595;letter-spacing:0.000px;white-space:nowrap;transform:scaleX(0.9323);transform-origin:0 0;">QUALITY</div><svg style="position:absolute;left:1281.2px;top:676.2px;" width="24" height="24" viewBox="0 0 24 24" fill="none" stroke="#9a9da6" stroke-width="1.6" stroke-linecap="round" stroke-linejoin="round"><path d="m21.73 18-8-14a2 2 0 0 0-3.48 0l-8 14A2 2 0 0 0 4 21h16a2 2 0 0 0 1.73-3"/><path d="M12 9v4"/><path d="M12 17h.01"/></svg><div style="position:absolute;left:1308.80px;top:678.82px;font-size:19px;line-height:19px;font-weight:700;color:#9a9da6;letter-spacing:0.000px;white-space:nowrap;transform:scaleX(0.8363);transform-origin:0 0;">No SKU</div><div style="position:absolute;left:1312.98px;top:713.90px;font-size:15px;line-height:15px;font-weight:400;color:#959595;letter-spacing:0.000px;white-space:nowrap;transform:scaleX(0.8890);transform-origin:0 0;">OEE</div><div style="position:absolute;left:1510.76px;top:676.15px;font-size:29px;line-height:29px;font-weight:700;color:#343a4a;letter-spacing:0.000px;white-space:nowrap;transform:scaleX(1.0350);transform-origin:0 0;">63</div><div style="position:absolute;left:1547.75px;top:681.89px;font-size:19.5px;line-height:19.5px;font-weight:700;color:#343a4a;letter-spacing:0.000px;white-space:nowrap;transform:scaleX(0.9600);transform-origin:0 0;">u/min</div><div style="position:absolute;left:1499.70px;top:713.90px;font-size:15px;line-height:15px;font-weight:400;color:#959595;letter-spacing:0.000px;white-space:nowrap;transform:scaleX(0.8609);transform-origin:0 0;">AVERAGE SPEED</div><div style="position:absolute;left:1743.42px;top:676.15px;font-size:29px;line-height:29px;font-weight:700;color:#343a4a;letter-spacing:0.000px;white-space:nowrap;transform:scaleX(0.9701);transform-origin:0 0;">9,644</div><div style="position:absolute;left:1720.73px;top:713.90px;font-size:15px;line-height:15px;font-weight:400;color:#959595;letter-spacing:0.000px;white-space:nowrap;transform:scaleX(0.8907);transform-origin:0 0;">TOTAL PRODUCTS</div><div style="position:absolute;left:325px;top:780px;width:1550px;height:23px;background:#f8f3f3"></div><div style="position:absolute;left:325px;top:780px;width:305px;height:23px;background:#53df9b"></div><div style="position:absolute;left:630px;top:780px;width:43.75px;height:23px;background:#f6d90b"></div><div style="position:absolute;left:673.75px;top:780px;width:8.350000000000023px;height:23px;background:#53df9b"></div><div style="position:absolute;left:682.1px;top:780px;width:1.7999999999999545px;height:23px;background:#f6d90b"></div><div style="position:absolute;left:683.9px;top:780px;width:10.100000000000023px;height:23px;background:#53df9b"></div><div style="position:absolute;left:694px;top:780px;width:3.8999999999999773px;height:23px;background:#f6d90b"></div><div style="position:absolute;left:697.9px;top:780px;width:8.600000000000023px;height:23px;background:#53df9b"></div><div style="position:absolute;left:706.5px;top:779px;width:16.0px;height:25px;background:linear-gradient(90deg,#fff,rgba(255,255,255,0))"></div><div style="position:absolute;left:325.30px;top:818.50px;font-size:14.3px;line-height:14.3px;font-weight:400;color:#9e9e9e;letter-spacing:0.717px;white-space:nowrap;">20:00</div><div style="position:absolute;left:693.10px;top:818.50px;font-size:14.3px;line-height:14.3px;font-weight:400;color:#9e9e9e;letter-spacing:0.717px;white-space:nowrap;">23:00</div><div style="position:absolute;left:1080.80px;top:818.50px;font-size:14.3px;line-height:14.3px;font-weight:400;color:#9e9e9e;letter-spacing:0.667px;white-space:nowrap;">02:00</div><div style="position:absolute;left:1468.30px;top:818.50px;font-size:14.3px;line-height:14.3px;font-weight:400;color:#9e9e9e;letter-spacing:0.667px;white-space:nowrap;">05:00</div><div style="position:absolute;left:1836.30px;top:818.50px;font-size:14.3px;line-height:14.3px;font-weight:400;color:#9e9e9e;letter-spacing:0.667px;white-space:nowrap;">08:00</div><div style="position:absolute;left:320.4px;top:855.4px;width:368.80000000000007px;height:41.60000000000002px;background:#fff;border:1px solid #efefef;border-radius:8px;box-sizing:border-box;box-shadow:0 1px 3px rgba(0,0,0,0.06)"></div><svg style="position:absolute;left:661.3000000000001px;top:867.9px;" width="17.5" height="17.5" viewBox="0 0 24 24" fill="none" stroke="#6e6e6e" stroke-width="2.1" stroke-linecap="round" stroke-linejoin="round"><path d="M12 3H5a2 2 0 0 0-2 2v14a2 2 0 0 0 2 2h14a2 2 0 0 0 2-2v-7"/><path d="M18.375 2.625a1 1 0 0 1 3 3l-9.013 9.014a2 2 0 0 1-.853.505l-2.873.84a.5.5 0 0 1-.62-.62l.84-2.873a2 2 0 0 1 .506-.852z"/></svg><div style="position:absolute;left:700.1px;top:855.4px;width:367.6px;height:41.60000000000002px;background:#fff;border:1px solid #efefef;border-radius:8px;box-sizing:border-box;box-shadow:0 1px 3px rgba(0,0,0,0.06)"></div><svg style="position:absolute;left:1039.8px;top:867.9px;" width="17.5" height="17.5" viewBox="0 0 24 24" fill="none" stroke="#6e6e6e" stroke-width="2.1" stroke-linecap="round" stroke-linejoin="round"><path d="M12 3H5a2 2 0 0 0-2 2v14a2 2 0 0 0 2 2h14a2 2 0 0 0 2-2v-7"/><path d="M18.375 2.625a1 1 0 0 1 3 3l-9.013 9.014a2 2 0 0 1-.853.505l-2.873.84a.5.5 0 0 1-.62-.62l.84-2.873a2 2 0 0 1 .506-.852z"/></svg><div style="position:absolute;left:1079px;top:855.4px;width:368.4000000000001px;height:41.60000000000002px;background:#fff;border:1px solid #efefef;border-radius:8px;box-sizing:border-box;box-shadow:0 1px 3px rgba(0,0,0,0.06)"></div><svg style="position:absolute;left:1419.5px;top:867.9px;" width="17.5" height="17.5" viewBox="0 0 24 24" fill="none" stroke="#6e6e6e" stroke-width="2.1" stroke-linecap="round" stroke-linejoin="round"><path d="M12 3H5a2 2 0 0 0-2 2v14a2 2 0 0 0 2 2h14a2 2 0 0 0 2-2v-7"/><path d="M18.375 2.625a1 1 0 0 1 3 3l-9.013 9.014a2 2 0 0 1-.853.505l-2.873.84a.5.5 0 0 1-.62-.62l.84-2.873a2 2 0 0 1 .506-.852z"/></svg><div style="position:absolute;left:1458px;top:855.4px;width:368.20000000000005px;height:41.60000000000002px;background:#fff;border:1px solid #efefef;border-radius:8px;box-sizing:border-box;box-shadow:0 1px 3px rgba(0,0,0,0.06)"></div><svg style="position:absolute;left:1798.3px;top:867.9px;" width="17.5" height="17.5" viewBox="0 0 24 24" fill="none" stroke="#6e6e6e" stroke-width="2.1" stroke-linecap="round" stroke-linejoin="round"><path d="M12 3H5a2 2 0 0 0-2 2v14a2 2 0 0 0 2 2h14a2 2 0 0 0 2-2v-7"/><path d="M18.375 2.625a1 1 0 0 1 3 3l-9.013 9.014a2 2 0 0 1-.853.505l-2.873.84a.5.5 0 0 1-.62-.62l.84-2.873a2 2 0 0 1 .506-.852z"/></svg><div style="position:absolute;left:1836.5px;top:855.4px;width:42.700000000000045px;height:41.60000000000002px;background:#fff;border:1px solid #efefef;border-radius:8px;box-sizing:border-box;box-shadow:0 1px 3px rgba(0,0,0,0.06)"></div><svg style="position:absolute;left:1846.7px;top:865px;" width="22.5" height="22.5" viewBox="0 0 24 24" fill="none" stroke="#6e6e6e" stroke-width="1.75" stroke-linecap="round" stroke-linejoin="round"><path d="M12.22 2h-.44a2 2 0 0 0-2 2v.18a2 2 0 0 1-1 1.73l-.43.25a2 2 0 0 1-2 0l-.15-.08a2 2 0 0 0-2.73.73l-.22.38a2 2 0 0 0 .73 2.73l.15.1a2 2 0 0 1 1 1.72v.51a2 2 0 0 1-1 1.74l-.15.09a2 2 0 0 0-.73 2.73l.22.38a2 2 0 0 0 2.73.73l.15-.08a2 2 0 0 1 2 0l.43.25a2 2 0 0 1 1 1.73V20a2 2 0 0 0 2 2h.44a2 2 0 0 0 2-2v-.18a2 2 0 0 1 1-1.73l.43-.25a2 2 0 0 1 2 0l.15.08a2 2 0 0 0 2.73-.73l.22-.39a2 2 0 0 0-.73-2.73l-.15-.08a2 2 0 0 1-1-1.74v-.5a2 2 0 0 1 1-1.74l.15-.09a2 2 0 0 0 .73-2.73l-.22-.38a2 2 0 0 0-2.73-.73l-.15.08a2 2 0 0 1-2 0l-.43-.25a2 2 0 0 1-1-1.73V4a2 2 0 0 0-2-2z"/><circle cx="12" cy="12" r="3"/></svg><svg style="position:absolute;left:330.3px;top:867.1px;" width="18.4" height="18.4" viewBox="0 0 24 24" fill="none" stroke="#eba12f" stroke-width="2.1" stroke-linecap="round" stroke-linejoin="round"><path d="m21.73 18-8-14a2 2 0 0 0-3.48 0l-8 14A2 2 0 0 0 4 21h16a2 2 0 0 0 1.73-3"/><path d="M12 9v4"/><path d="M12 17h.01"/></svg><div style="position:absolute;left:359.00px;top:868.71px;font-size:17px;line-height:17px;font-weight:400;color:#363636;letter-spacing:0.000px;white-space:nowrap;transform:scaleX(0.9546);transform-origin:0 0;">Annotate Stops</div><div style="position:absolute;left:559.3px;top:865.2px;width:91.90000000000009px;height:22.5px;background:#fcefc7;border-radius:12px"></div><div style="position:absolute;left:568.65px;top:868.90px;font-size:15px;line-height:15px;font-weight:400;color:#e5a137;letter-spacing:0.000px;white-space:nowrap;transform:scaleX(0.9573);transform-origin:0 0;">1/5 pending</div><svg style="position:absolute;left:708.8px;top:867.4px;" width="19.2" height="19.2" viewBox="0 0 24 24" fill="none" stroke="#6b52ee" stroke-width="2.0" stroke-linecap="round" stroke-linejoin="round"><path d="M19 21v-2a4 4 0 0 0-4-4H9a4 4 0 0 0-4 4v2"/><circle cx="12" cy="7" r="4"/></svg><div style="position:absolute;left:737.33px;top:868.71px;font-size:17px;line-height:17px;font-weight:400;color:#363636;letter-spacing:0.000px;white-space:nowrap;transform:scaleX(0.9568);transform-origin:0 0;">Select Operator</div><svg style="position:absolute;left:1088.3px;top:867.2px;" width="18.8" height="18.8" viewBox="0 0 24 24" fill="none" stroke="#22c3d8" stroke-width="2.0" stroke-linecap="round" stroke-linejoin="round"><path d="M21 8a2 2 0 0 0-1-1.73l-7-4a2 2 0 0 0-2 0l-7 4A2 2 0 0 0 3 8v8a2 2 0 0 0 1 1.73l7 4a2 2 0 0 0 2 0l7-4A2 2 0 0 0 21 16Z"/><path d="m3.3 7 8.7 5 8.7-5"/><path d="M12 22V12"/></svg><div style="position:absolute;left:1115.75px;top:868.71px;font-size:17px;line-height:17px;font-weight:400;color:#363636;letter-spacing:0.000px;white-space:nowrap;transform:scaleX(0.9253);transform-origin:0 0;">Select SKU</div><svg style="position:absolute;left:1467.1px;top:867.2px;" width="18.8" height="18.8" viewBox="0 0 24 24" fill="none" stroke="#d52ee2" stroke-width="2.0" stroke-linecap="round" stroke-linejoin="round"><path d="M21 10V8a2 2 0 0 0-1-1.73l-7-4a2 2 0 0 0-2 0l-7 4A2 2 0 0 0 3 8v8a2 2 0 0 0 1 1.73l7 4a2 2 0 0 0 2 0l2-1.14"/><path d="m7.5 4.27 9 5.15"/><polyline points="3.29 7 12 12 20.71 7"/><line x1="12" x2="12" y1="22" y2="12"/><path d="m17 13 5 5m-5 0 5-5"/></svg><div style="position:absolute;left:1496.30px;top:868.71px;font-size:17px;line-height:17px;font-weight:400;color:#363636;letter-spacing:0.000px;white-space:nowrap;transform:scaleX(0.9500);transform-origin:0 0;">Add Defects</div><div style="position:absolute;left:305px;top:931.5px;width:1589px;height:62.0px;background:#fff;border:1px solid #e6e6e6;border-radius:8px;box-sizing:border-box;border-bottom:none;border-radius:8px 8px 0 0"></div><div style="position:absolute;left:306px;top:932.5px;width:1587px;height:51.299999999999955px;background:#fcf5d8;border-radius:7px 7px 0 0"></div><div style="position:absolute;left:324.38px;top:946.28px;font-size:24px;line-height:24px;font-weight:700;color:#383838;letter-spacing:0.000px;white-space:nowrap;transform:scaleX(0.8864);transform-origin:0 0;">Bag Line 6</div><div style="position:absolute;left:450.5px;top:943.5px;width:58.5px;height:28.0px;background:#f8e07a;border-radius:14px"></div><div style="position:absolute;left:459.20px;top:950.93px;font-size:16.5px;line-height:16.5px;font-weight:400;color:#333;letter-spacing:0.516px;white-space:nowrap;-webkit-text-stroke:0.3px #333">Night</div><div style="position:absolute;left:1690px;top:931.5px;width:204px;height:52.299999999999955px;background:#f8e07a;border-radius:0 8px 0 17px"></div><svg style="position:absolute;left:1708px;top:945.6px;" width="24" height="24" viewBox="0 0 24 24" fill="none" stroke="#3a3d42" stroke-width="2" stroke-linecap="round" stroke-linejoin="round"><path d="M12.338 21.994A10 10 0 1 1 21.925 13.227"/><path d="M12 6v6l2 1"/><path d="m14 18 4 4 4-4"/><path d="M18 14v8"/></svg><div style="position:absolute;left:1741.12px;top:947.48px;font-size:22px;line-height:22px;font-weight:700;color:#3a3d42;letter-spacing:0.000px;white-space:nowrap;transform:scaleX(0.9653);transform-origin:0 0;">8m</div><div style="position:absolute;left:1782.1000000000001px;top:950.0px;width:2.5px;height:19.0px;background:#3a3d42"></div><div style="position:absolute;left:1795.85px;top:947.48px;font-size:22px;line-height:22px;font-weight:700;color:#3a3d42;letter-spacing:0.000px;white-space:nowrap;transform:scaleX(0.9087);transform-origin:0 0;">Stopped</div><div style="position:absolute;left:1909px;top:331px;width:8.599999999999909px;height:263px;background:#a3a3a3;border-radius:5px"></div><div style="position:absolute;left:915px;top:1012px;width:90px;height:20px;border-radius:50%;background:radial-gradient(ellipse at center, rgba(120,230,160,0.35), rgba(255,255,255,0) 70%)"></div>
</body></html>
